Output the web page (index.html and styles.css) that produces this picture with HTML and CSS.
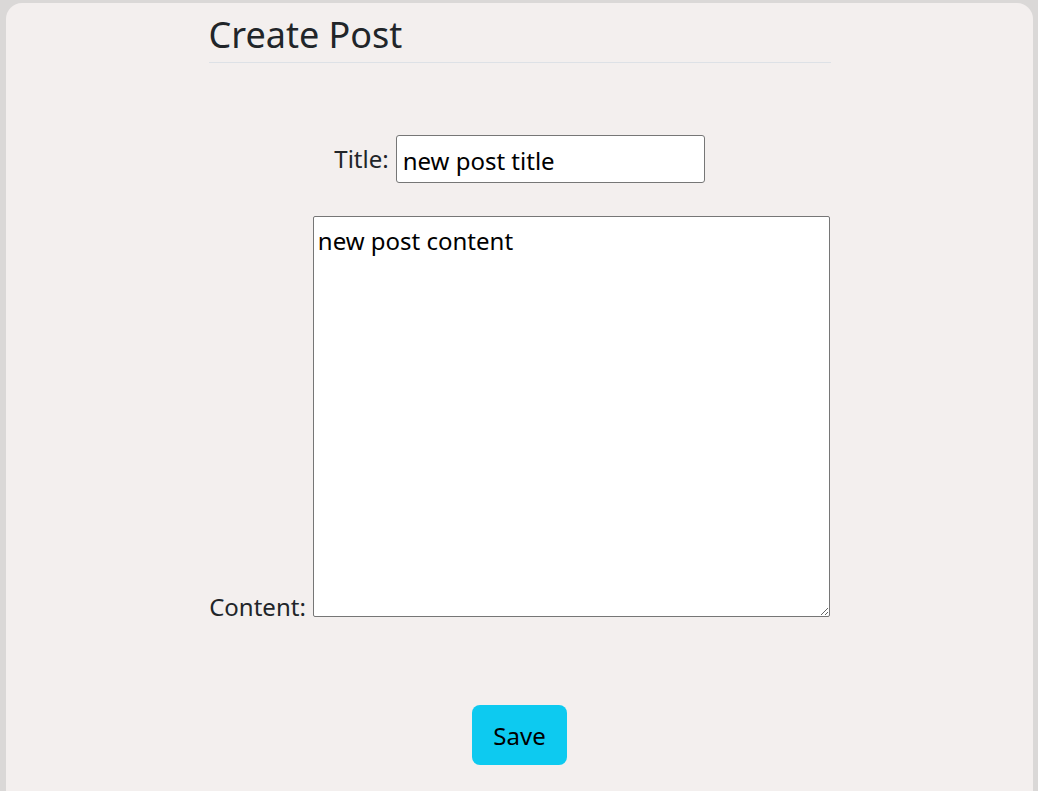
FILE: index.html
```html
<!DOCTYPE html>
<html>
<head>
<meta charset="utf-8">
<link rel="stylesheet" href="styles.css">
</head>
<body>
<div class="card">
  <div class="page">
    <h1 class="heading">Create Post</h1>
    <form class="form">
      <div class="row">
        <label class="label" for="title">Title:</label>
        <input id="title" class="input" type="text" value="new post title">
      </div>
      <div class="row row-content">
        <label class="label" for="content">Content:</label>
        <textarea id="content" class="textarea">new post content</textarea>
      </div>
      <div class="actions">
        <button type="button" class="save">Save</button>
      </div>
    </form>
  </div>
</div>
</body>
</html>
```
FILE: styles.css
```css
html, body {
  margin: 0;
  padding: 0;
  height: 100%;
}
body {
  background: #dad8d7;
  font-family: "Noto Sans", "Open Sans", sans-serif;
  color: #212529;
  overflow: hidden;
  padding: 3px 5px 0 6px;
  box-sizing: border-box;
}
.card {
  background: #f3efee;
  border-radius: 16px;
  height: 820px;
}
.page {
  width: 622px;
  margin: 0 auto;
}
.heading {
  margin: 0;
  padding-top: 7px;
  font-size: 36px;
  font-weight: 400;
  line-height: 50px;
  border-bottom: 1px solid #dde1e6;
  padding-bottom: 2px;
}
.form {
  display: flex;
  flex-direction: column;
  align-items: center;
  padding-top: 72px;
}
.row {
  display: flex;
  align-items: center;
  gap: 7px;
  font-size: 24px;
}
.row-content {
  margin-top: 33px;
  align-items: flex-end;
}
.label {
  font-size: 24px;
  line-height: 32px;
}
.row-content .label {
  margin-bottom: -6px;
}
.input {
  width: 309px;
  height: 48px;
  box-sizing: border-box;
  border: 1px solid #767676;
  border-radius: 3px;
  padding: 2px 6px 0;
  font: inherit;
  font-size: 24px;
  color: #000;
  background: #fff;
}
.textarea {
  width: 517px;
  height: 401px;
  box-sizing: border-box;
  border: 1px solid #767676;
  border-radius: 2px;
  padding: 10px 4px 6px;
  font: inherit;
  font-size: 24px;
  line-height: 1.2;
  color: #000;
  background: #fff;
  resize: both;
}
.actions {
  margin-top: 88px;
}
.save {
  width: 95px;
  height: 60px;
  border: none;
  border-radius: 8px;
  background: #0dcaf0;
  color: #000;
  font: inherit;
  font-size: 24px;
}
```
